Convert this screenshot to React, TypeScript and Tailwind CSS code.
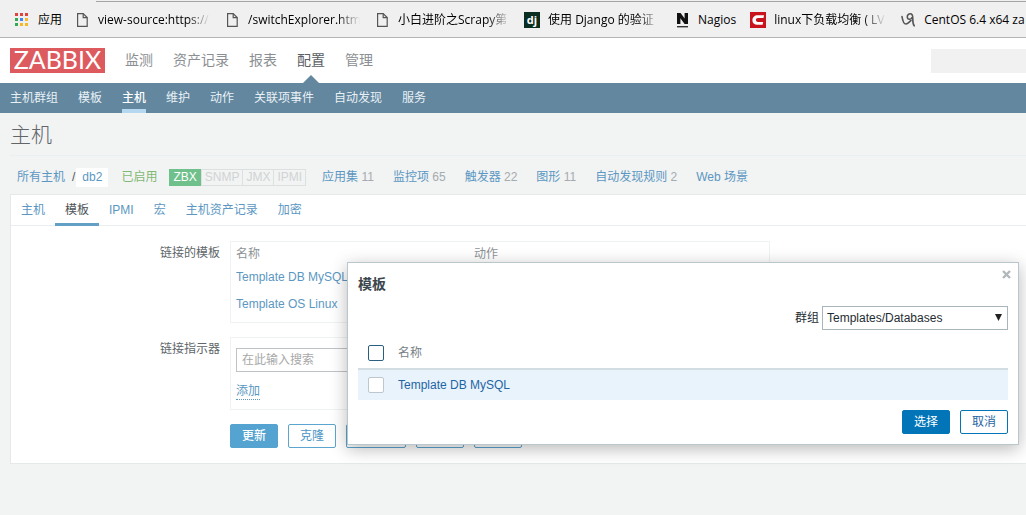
import type { ReactNode } from "react";

const mainNav = ["监测", "资产记录", "报表", "配置", "管理"];
const subNav = ["主机群组", "模板", "主机", "维护", "动作", "关联项事件", "自动发现", "服务"];
const tabs = ["主机", "模板", "IPMI", "宏", "主机资产记录", "加密"];
const hostLinks = [
  { label: "应用集", count: 11 },
  { label: "监控项", count: 65 },
  { label: "触发器", count: 22 },
  { label: "图形", count: 11 },
  { label: "自动发现规则", count: 2 },
  { label: "Web 场景" },
];

function AppsIcon() {
  const colors = ["#e0433f", "#e0433f", "#e0433f", "#35a852", "#4285f4", "#f5b924", "#35a852", "#f5b924", "#f5b924"];
  return (
    <svg width="16" height="16" viewBox="0 0 16 16" aria-hidden="true">
      {colors.map((color, i) => (
        <rect key={i} x={1 + (i % 3) * 5} y={1 + Math.floor(i / 3) * 5} width="3" height="3" fill={color} />
      ))}
    </svg>
  );
}

function PageIcon() {
  return (
    <svg width="16" height="16" viewBox="0 0 16 16" fill="none" stroke="#555" strokeWidth="1.2" aria-hidden="true">
      <path d="M3.600 1.600h5.600l4 4v8.800H3.600z" />
      <path d="M9.200 1.600v4h4" />
    </svg>
  );
}

function DjangoIcon() {
  return (
    <span className="flex size-4 items-center justify-center bg-[#0c2e20] pb-0.5 text-[11px] leading-none font-bold text-white">
      dj
    </span>
  );
}

function NagiosIcon() {
  return (
    <svg width="16" height="16" viewBox="0 0 16 16" aria-hidden="true">
      <path d="M3 12V1h3.600l4 5.500V1H14v11h-3.400l-4.200-5.800V12z" fill="#111" />
      <path d="M3 14h11v1.400H3z" fill="#333" />
    </svg>
  );
}

function CsdnIcon() {
  return (
    <svg width="16" height="16" viewBox="0 0 16 16" aria-hidden="true">
      <path d="M0 0h16v16H0z" fill="#c8141c" />
      <path d="M14 3.200 13.500 6H8.200C6.600 6 5.900 6.900 5.900 8s.6 1.900 2.100 1.900h5.200l-.6 2.900H7.400C4.200 12.800 2.400 11 2.400 8.200c0-3 2.200-5 5.400-5z" fill="#fff" />
    </svg>
  );
}

function CentosIcon() {
  return (
    <svg width="16" height="16" viewBox="0 0 16 16" fill="none" stroke="#555" strokeWidth="1.600" strokeLinecap="round" aria-hidden="true">
      <path d="M2 4.500C2.500 8 3.500 12 6 12c1.800 0 3-2 5-3.500" />
      <path d="M12 5.500C11 8 7.500 8 7.300 5 7.200 2.800 8.800 1.800 10.200 1.800c2 0 2.600 2 2.600 4.500 0 3-.2 5.500 1.400 7.500" />
    </svg>
  );
}

function Bookmark({ icon, children, clipped = false }: { icon: ReactNode; children: ReactNode; clipped?: boolean }) {
  return (
    <a href="#bookmark" className="flex shrink-0 items-center gap-2 text-black">
      {icon}
      <span
        className={
          clipped
            ? "w-28 whitespace-nowrap [mask-image:linear-gradient(to_right,black_80%,transparent)]"
            : "whitespace-nowrap"
        }
      >
        {children}
      </span>
    </a>
  );
}

function BookmarkBar() {
  return (
    <div className="flex h-[38px] flex-col border-b border-[#b4b4b4] bg-[#f1f0f0] font-['Open_Sans','Noto_Sans_CJK_SC',sans-serif]">
      <div className="mt-px ml-24 h-px bg-[#a3a5a4]" />
      <div className="flex flex-1 items-center gap-3.5 overflow-hidden pt-px pl-3.5 text-xs">
        <div className="-mr-0.5">
          <Bookmark icon={<AppsIcon />}>应用</Bookmark>
        </div>
        <Bookmark icon={<PageIcon />} clipped>view-source:https://</Bookmark>
        <Bookmark icon={<PageIcon />} clipped>/switchExplorer.htm</Bookmark>
        <Bookmark icon={<PageIcon />} clipped>小白进阶之Scrapy第</Bookmark>
        <Bookmark icon={<DjangoIcon />} clipped>使用 Django 的验证</Bookmark>
        <Bookmark icon={<NagiosIcon />}>Nagios</Bookmark>
        <Bookmark icon={<CsdnIcon />} clipped>linux下负载均衡 ( LV</Bookmark>
        <Bookmark icon={<CentosIcon />}>CentOS 6.4 x64 za</Bookmark>
      </div>
    </div>
  );
}

function Header() {
  return (
    <header>
      <div className="flex h-[45px] items-center bg-white pl-2.5">
        <a
          href="#home"
          className="flex h-[25px] w-[95px] items-center justify-center bg-[#dd5a5f] pb-0.5 font-['Lato',sans-serif] text-[25px] leading-none text-white"
        >
          ZABBIX
        </a>
        <nav className="ml-5 flex gap-5 self-stretch text-sm">
          {mainNav.map((item) => (
            <a
              key={item}
              href="#menu"
              className={
                item === "配置"
                  ? "relative flex items-center pb-0.5 text-[#5a6065]"
                  : "flex items-center pb-0.5 text-[#8b8f93]"
              }
            >
              {item}
              {item === "配置" && (
                <svg className="absolute bottom-0 left-1/2 -translate-x-1/2" width="16" height="8" viewBox="0 0 16 8" aria-hidden="true">
                  <path d="M0 8 8 0l8 8z" fill="#62879f" />
                </svg>
              )}
            </a>
          ))}
        </nav>
        <input aria-label="搜索" className="ml-auto h-6 w-[95px] bg-[#f1f1f1]" />
      </div>
      <nav className="flex h-[30px] gap-5 bg-[#62879f] px-2.5 text-xs text-[#e9f1f6]">
        {subNav.map((item) => (
          <a
            key={item}
            href="#submenu"
            className={
              item === "主机"
                ? "flex items-center border-b-4 border-[#b5d8f0] pt-1 font-medium text-white"
                : "flex items-center"
            }
          >
            {item}
          </a>
        ))}
      </nav>
    </header>
  );
}

function HostSummary() {
  return (
    <div className="flex h-[38px] items-center pt-1 pl-[7px] text-[#5b97c2]">
      <a href="#hosts">所有主机</a>
      <span className="ml-[7px] text-[#555]">/</span>
      <a href="#db2" className="ml-px flex h-[19px] items-center bg-white px-1.5">db2</a>
      <span className="ml-[13px] text-[#7fb972]">已启用</span>
      <div className="ml-3 flex h-[17px] items-stretch leading-[15px] text-[#cfd3d3]">
        <span className="border border-[#70c08c] bg-[#70c08c] px-[3px] text-white">ZBX</span>
        <span className="border border-[#dde0e0] px-[3px]">SNMP</span>
        <span className="border border-l-0 border-[#dde0e0] px-[3px]">JMX</span>
        <span className="border border-l-0 border-[#dde0e0] px-[3px]">IPMI</span>
      </div>
      <ul className="ml-4 flex gap-[19px] whitespace-nowrap">
        {hostLinks.map(({ label, count }) => (
          <li key={label}>
            <a href="#detail">{label}</a>
            {count !== undefined && <span className="text-[#a5abaf]"> {count}</span>}
          </li>
        ))}
      </ul>
    </div>
  );
}

const outlineButton = "h-6 rounded-xs border border-[#5ba5d0] bg-white px-[11px] text-[#4b95c4]";

function HostForm() {
  return (
    <form className="border border-r-0 border-[#e6e9ea] bg-white pb-[15px]">
      <div className="flex h-[31px] border-b border-[#ebeef0] text-[#5b97c2]">
        {tabs.map((tab) => (
          <button
            key={tab}
            type="button"
            className={
              tab === "模板"
                ? "-mb-px border-b-3 border-[#62a0c6] px-2.5 pt-0.5 text-[#4d5458]"
                : "px-2.5"
            }
          >
            {tab}
          </button>
        ))}
      </div>
      <div className="mt-[15px] grid grid-cols-[209px_1fr] gap-x-2.5 gap-y-3.5 text-[#60666a]">
        <div className="pt-0.5 text-right leading-5">链接的模板</div>
        <div className="h-[82px] w-[540px] border border-[#eff2f3] px-[5px] pt-0.5">
          <table className="w-full text-left">
            <thead className="text-[#8d9296]">
              <tr className="h-5">
                <th className="w-[238px] p-0 font-normal">名称</th>
                <th className="p-0 font-normal">动作</th>
              </tr>
            </thead>
            <tbody className="text-[#5b97c2]">
              <tr className="h-[26px]">
                <td className="p-0"><a href="#mysql">Template DB MySQL</a></td>
                <td className="p-0" />
              </tr>
              <tr className="h-[27px]">
                <td className="p-0"><a href="#linux">Template OS Linux</a></td>
                <td className="p-0" />
              </tr>
            </tbody>
          </table>
        </div>
        <label htmlFor="template-search" className="pt-0.5 text-right leading-5">链接指示器</label>
        <div className="flex h-[73px] w-[540px] flex-col items-start gap-[11px] border border-[#eff2f3] px-[5px] pt-2.5">
          <input
            id="template-search"
            placeholder="在此输入搜索"
            className="h-6 w-[300px] shrink-0 border border-[#bfc3c5] px-[5px] placeholder:text-[#a8a8a8]"
          />
          <button type="button" className="border-b border-dotted border-[#5b97c2] leading-4 text-[#5b97c2]">添加</button>
        </div>
        <div className="col-start-2 flex gap-2.5">
          <button type="button" className="h-6 rounded-xs border border-[#55a3d1] bg-[#55a3d1] px-[11px] font-medium text-white">更新</button>
          <button type="button" className={outlineButton}>克隆</button>
          <button type="button" className={outlineButton}>全克隆</button>
          <button type="button" className={outlineButton}>删除</button>
          <button type="button" className={outlineButton}>取消</button>
        </div>
      </div>
    </form>
  );
}

function TemplateDialog() {
  return (
    <section
      role="dialog"
      aria-labelledby="dialog-title"
      className="absolute top-[262px] right-[7px] w-[672px] border border-[#b9c6cb] bg-white px-2.5 pb-2.5 shadow-[0_4px_16px_rgba(0,0,0,0.28)]"
    >
      <button type="button" aria-label="关闭" className="absolute top-[7px] right-[7px]">
        <svg width="9" height="9" viewBox="0 0 9 9" stroke="#b2b7ba" strokeWidth="2.400" aria-hidden="true">
          <path d="m1 1 7 7M8 1 1 8" />
        </svg>
      </button>
      <h2 id="dialog-title" className="pt-[11px] text-sm leading-5 font-bold text-[#3c474d]">模板</h2>
      <div className="mt-3 flex items-center justify-end gap-[3px] text-[#1f2c33]">
        <label htmlFor="group">群组</label>
        <div className="relative">
          <select id="group" className="block h-6 w-[186px] appearance-none border border-[#a8b5bb] bg-white px-1">
            <option>Templates/Databases</option>
          </select>
          <svg className="pointer-events-none absolute top-2 right-1.5" width="7" height="7" viewBox="0 0 7 7" aria-hidden="true">
            <path d="M0 0h7L3.500 7z" fill="#222" />
          </svg>
        </div>
      </div>
      <table className="mt-[7px] w-full text-left">
        <thead>
          <tr className="h-8 border-b-2 border-[#d2dde3]">
            <th className="w-10 p-0 pl-2.5">
              <input type="checkbox" aria-label="全选" className="block size-4 appearance-none rounded-xs border border-[#2a5f80] bg-white" />
            </th>
            <th className="p-0 font-normal text-[#768087]">名称</th>
          </tr>
        </thead>
        <tbody>
          <tr className="h-[31px] bg-[#e8f3fc]">
            <td className="p-0 pl-2.5">
              <input type="checkbox" aria-label="Template DB MySQL" className="block size-4 appearance-none rounded-xs border border-[#bdc7cd] bg-white" />
            </td>
            <td className="p-0"><a href="#mysql" className="text-[#1f65a3]">Template DB MySQL</a></td>
          </tr>
        </tbody>
      </table>
      <div className="mt-2.5 flex justify-end gap-2.5">
        <button type="button" className="h-6 rounded-xs border border-[#0275b8] bg-[#0275b8] px-[11px] text-white">选择</button>
        <button type="button" className="h-6 rounded-xs border border-[#0275b8] bg-white px-[11px] text-[#1f65a3]">取消</button>
      </div>
    </section>
  );
}

export default function App() {
  return (
    <div className="relative min-h-screen overflow-hidden bg-[#f2f3f3] font-['Liberation_Sans','Noto_Sans_CJK_SC',sans-serif] text-xs">
      <BookmarkBar />
      <Header />
      <main className="pl-2.5">
        <h1 className="flex h-[43px] items-center border-b border-[#eaeff2] pt-0.5 text-[21px] font-light text-[#60666a]">主机</h1>
        <HostSummary />
        <HostForm />
      </main>
      <TemplateDialog />
    </div>
  );
}
